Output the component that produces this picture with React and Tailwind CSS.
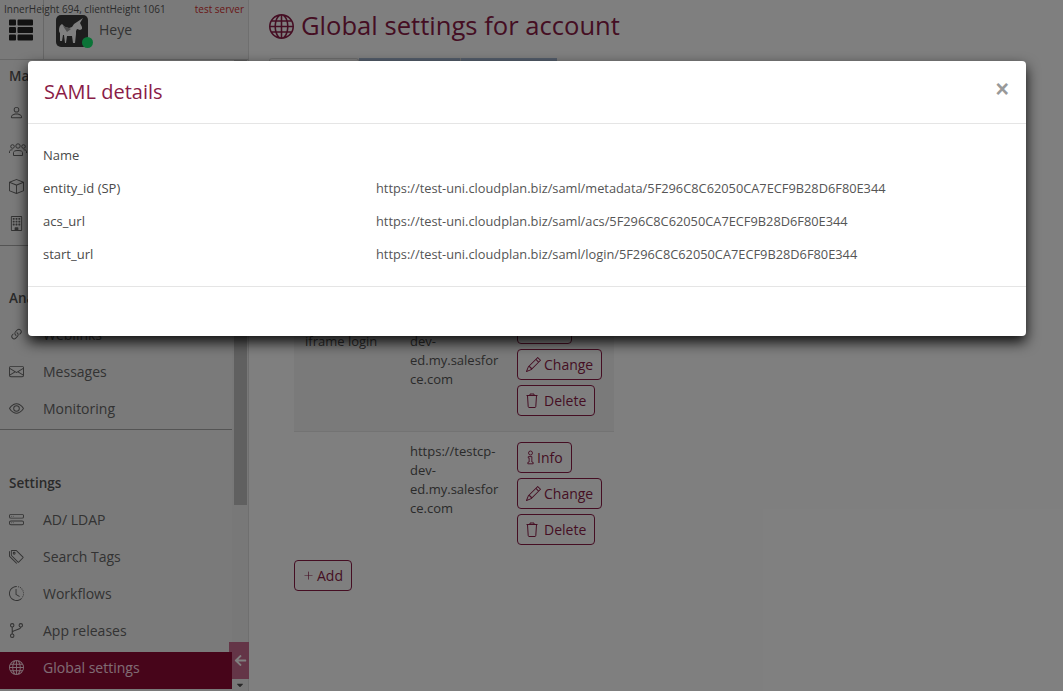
import React from 'react';
import { FaThList, FaArrowLeft, FaCaretDown } from 'react-icons/fa';
import { BsPerson, BsBox, BsBuilding, BsLink45Deg, BsEnvelope, BsEye, BsHddStack, BsTags, BsClockHistory, BsGlobe, BsPencil, BsPlusLg } from 'react-icons/bs';

const ThreePeople = ({ className }) => (
  <svg viewBox="0 0 18 14" fill="none" stroke="currentColor" strokeWidth="1" className={className}>
    <circle cx="3.5" cy="3.5" r="1.8" />
    <circle cx="9" cy="3" r="2.2" />
    <circle cx="14.5" cy="3.5" r="1.8" />
    <path d="M.5 10V8.5c0-1 1-1.7 3-1.7M17.5 10V8.5c0-1-1-1.7-3-1.7" />
    <path d="M4.5 12.5V9.5c0-1.2 1.5-2 4.5-2s4.5.8 4.5 2v3z" />
  </svg>
);

const BranchIcon = ({ className }) => (
  <svg viewBox="0 0 14 14" fill="none" stroke="currentColor" strokeWidth="1" className={className}>
    <circle cx="3" cy="2.2" r="1.6" />
    <circle cx="11" cy="2.2" r="1.6" />
    <circle cx="3" cy="11.8" r="1.6" />
    <path d="M3 3.8v6.4M11 3.8c0 3-8 2.5-8 5" />
  </svg>
);

const SECTIONS = [
  { title: 'Manage', box: 'border-b border-[#a8a8a8] pb-[3px]', head: 'pt-[6px] pb-[8px]', items: [['Users', BsPerson], ['Groups', ThreePeople], ['Apps', BsBox], ['Company', BsBuilding]] },
  { title: 'Analytics', box: 'border-b border-[#a8a8a8] pb-[2px]', head: 'pt-[42px] pb-[8px]', items: [['Weblinks', BsLink45Deg], ['Messages', BsEnvelope], ['Monitoring', BsEye]] },
  { title: 'Settings', box: '', head: 'pt-[43px] pb-[8px]', items: [['AD/ LDAP', BsHddStack], ['Search Tags', BsTags], ['Workflows', BsClockHistory], ['App releases', BranchIcon], ['Global settings', BsGlobe, true]] },
];

const DETAILS = [
  ['entity_id (SP)', 'https://test-uni.cloudplan.biz/saml/metadata/5F296C8C62050CA7ECF9B28D6F80E344'],
  ['acs_url', 'https://test-uni.cloudplan.biz/saml/acs/5F296C8C62050CA7ECF9B28D6F80E344'],
  ['start_url', 'https://test-uni.cloudplan.biz/saml/login/5F296C8C62050CA7ECF9B28D6F80E344'],
];

const Unicorn = () => (
  <svg viewBox="0 0 32 32" className="w-8 h-8">
    <rect width="32" height="32" rx="5" fill="#3a3a3a" />
    <path d="M3 15c0-3 1-5 3-6l3 3 4 1 3-1 2-3 3-2 6-4-3 5 2 4 0 2-2 1-3-1-1 2v3l-1 9h-2l-1-7-5 0-1 7H9l-1-8-1 0-1 6H4l0-8c-1-1-1-2-1-3z" fill="#fff" />
    <path d="M7 11l4 6 4-3-2-1z" fill="#9a9a9a" />
  </svg>
);

const InfoGlyph = () => (
  <svg viewBox="0 0 10 16" fill="none" stroke="currentColor" strokeWidth="1" className="w-[9px] h-[15px]">
    <circle cx="5" cy="3" r="2.2" />
    <path d="M2.5 7h4v6l1.5.5V15H2v-1.5l1.5-.5V8.5H2.5z" />
  </svg>
);

const TrashGlyph = () => (
  <svg viewBox="0 0 12 15" fill="none" stroke="currentColor" strokeWidth="1" className="w-[12px] h-[15px]">
    <path d="M.5 2.5h11M4 2.5V1h4v1.5M1.5 2.5l.7 11c0 .5.3 1 .8 1h6c.5 0 .8-.5.8-1l.7-11" />
  </svg>
);

const Button = ({ icon, label, gap }) => (
  <button className={`flex items-center ${gap} h-[31px] px-[8px] border border-[#8a1c47] rounded-[4px] text-[14px] text-[#8a1c47] bg-white w-fit`}>
    {icon}
    {label}
  </button>
);

const SamlRow = ({ name, shaded }) => (
  <div className={shaded ? 'flex bg-[#f5f5f5] border-b border-[#e6e6e6] h-[129px] pt-[10px]' : 'flex h-[128px] pt-[10px]'}>
    <div className="w-[116px] pl-[11px] pt-[19px] text-[#555]">{name}</div>
    <div className="w-[107px] leading-[19px] text-[#555] break-all">
      https://testcp-<br />dev-<br />ed.my.salesfor<br />ce.com
    </div>
    <div className="flex flex-col gap-[5px]">
      <Button icon={<InfoGlyph />} label="Info" gap="gap-[2px]" />
      <Button icon={<BsPencil className="text-[15px]" />} label="Change" gap="gap-[3px]" />
      <Button icon={<TrashGlyph />} label="Delete" gap="gap-[6px]" />
    </div>
  </div>
);

const App = () => {
  return (
    <div className="relative flex w-[1063px] h-[691px] overflow-hidden bg-white font-['Open_Sans',sans-serif] text-[13px]">
      {/* Sidebar */}
      <aside className="relative isolate flex flex-col w-[249px] shrink-0 bg-[#f5f5f5] border-r border-[#dedede]">
        <div className="flex h-[60px] shrink-0 border-b border-[#cfcfcf]">
          <div className="flex items-start justify-center w-[44px] pt-[18px] pr-[2px] border-r border-[#cfcfcf]">
            <FaThList className="text-[#222] text-[24px]" />
          </div>
          <div className="flex gap-[11px] pl-[12px] pt-[15px]">
            <div className="relative h-8">
              <Unicorn />
              <span className="absolute -right-[5px] -bottom-[1px] w-[11px] h-[11px] rounded-full bg-[#16e86f]" />
            </div>
            <span className="text-[14px] leading-[30px] text-[#666]">Heye</span>
          </div>
        </div>
        <div className="flex flex-1 min-h-0">
          <nav className="relative z-10 w-[232px] shrink-0">
            {SECTIONS.map((section) => (
              <div key={section.title} className={section.box}>
                <div className={`px-[9px] text-[13.5px] font-semibold text-[#555] leading-[20px] ${section.head}`}>{section.title}</div>
                {section.items.map(([label, Icon, active]) => (
                  <div key={label} className={`flex items-center pl-[9px] text-[14px] ${active ? 'h-[37px] mt-[3px] pb-[7px] bg-[#8f0b35] text-[#ffd9e6]' : 'h-[37px] text-[#666]'}`}>
                    <span className="flex items-center w-[34px] shrink-0">
                      <Icon className={label === 'Groups' ? 'w-[18px] h-[14px]' : 'w-[15px] h-[15px]'} />
                    </span>
                    {label}
                  </div>
                ))}
              </div>
            ))}
          </nav>
          <div className="relative flex flex-col items-center w-[16px] bg-[#f1f1f1]">
            <div className="w-[13px] h-[445px] bg-[#c1c1c1] -mr-[1px]" />
            <FaCaretDown className="mt-auto mb-[1px] text-[10px] text-[#505050]" />
          </div>
        </div>
        <div className="absolute left-[229px] top-[642px] flex items-center justify-center w-[20px] h-[37px] bg-[#c96a8e] text-white">
          <FaArrowLeft className="text-[13px] ml-[3px]" />
        </div>
      </aside>

      {/* Main */}
      <main className="flex-1 min-w-0 pt-[9px]">
        <div className="flex items-center gap-[7px] pl-[20px] h-[34px] text-[#8a1c47]">
          <BsGlobe className="text-[25px]" />
          <h1 className="text-[25.6px] font-normal">Global settings for account</h1>
        </div>
        <div className="flex ml-[20px] mt-[15px] h-[40px] text-[13px]">
          <div className="w-[90px] border border-[#ddd] border-b-0 rounded-t-[3px]" />
          <div className="w-[102px] bg-[#a9bdd9] border-r border-[#ddd]" />
          <div className="w-[96px] bg-[#a9bdd9]" />
        </div>
        <div className="ml-[45px] mt-[205px] w-[320px] text-[13px]">
          <SamlRow name="iframe login" shaded />
          <SamlRow name="" />
        </div>
        <button className="flex items-center gap-[3px] ml-[45px] h-[31px] px-[8px] border border-[#8a1c47] rounded-[4px] text-[14px] text-[#8a1c47]">
          <BsPlusLg className="text-[11px]" />
          Add
        </button>
      </main>

      <div className="absolute left-0 top-0 w-full flex justify-between text-[10px] leading-[18px] text-[#555] pl-[4px] pr-[819px]">
        <span>InnerHeight 694, clientHeight 1061</span>
        <span className="text-[#d32f2f]">test server</span>
      </div>

      {/* Modal backdrop */}
      <div className="absolute inset-0 bg-black/50" />
      <div className="absolute left-[28px] top-[61px] w-[998px] h-[275px] flex flex-col bg-white rounded-[4px] shadow-[0_6px_14px_rgba(0,0,0,0.9)]">
        <div className="relative flex items-center h-[63px] shrink-0 pl-[16px] border-b border-[#e5e5e5]">
          <h2 className="text-[20px] font-normal text-[#8a1c47]">SAML details</h2>
          <span className="absolute right-[17px] top-[13px] font-['Liberation_Sans',sans-serif] text-[23px] font-bold leading-[30px] text-[#999]">×</span>
        </div>
        <div className="flex-1 pl-[15px] pt-[15px] text-[13px] text-[#4a4a4a]">
          <div className="h-[33px] leading-[33px] font-medium">Name</div>
          {DETAILS.map(([key, value]) => (
            <div key={key} className="flex h-[33px] leading-[33px]">
              <span className="w-[333px] font-medium shrink-0">{key}</span>
              <span className="text-[12.8px] text-[#555]">{value}</span>
            </div>
          ))}
        </div>
        <div className="h-[50px] shrink-0 border-t border-[#e5e5e5]" />
      </div>
    </div>
  );
};

export default App;
